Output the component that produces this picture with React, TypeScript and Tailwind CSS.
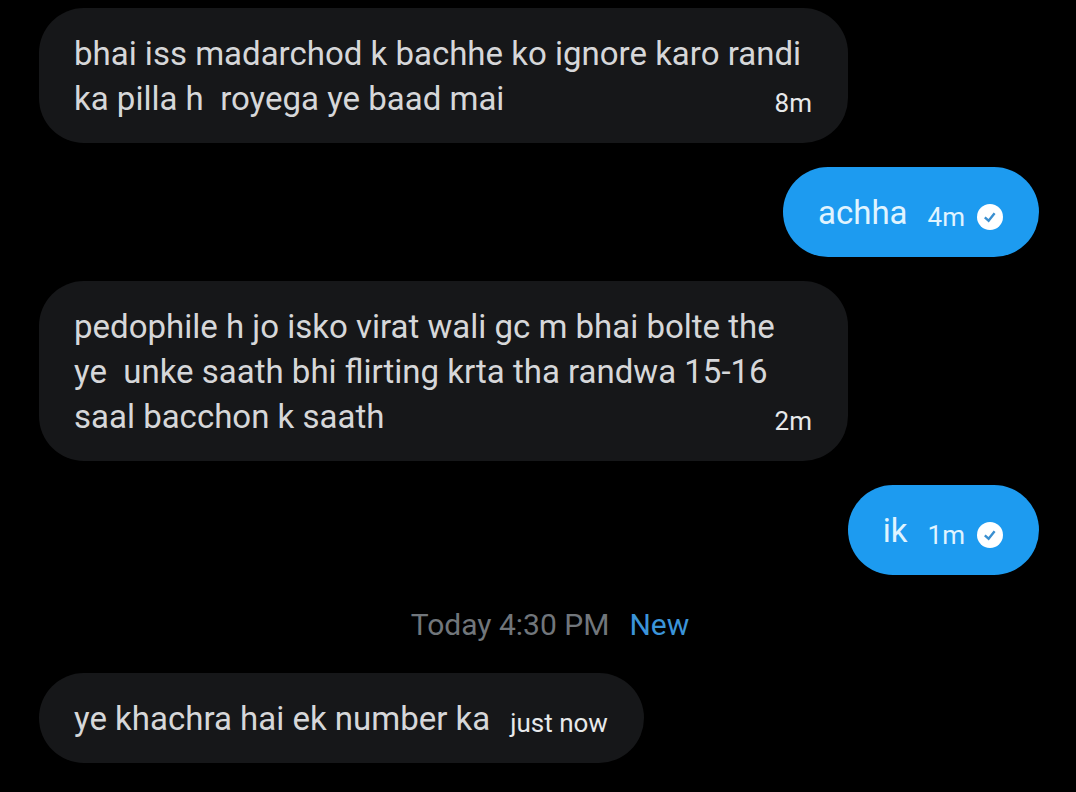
import React from "react";
import clsx from "clsx";

interface Message {
  id: number;
  lines: string[];
  time: string;
  sent?: boolean;
}

const earlier: Message[] = [
  {
    id: 1,
    lines: [
      "bhai iss madarchod k bachhe ko ignore karo randi",
      "ka pilla h  royega ye baad mai",
    ],
    time: "8m",
  },
  { id: 2, lines: ["achha"], time: "4m", sent: true },
  {
    id: 3,
    lines: [
      "pedophile h jo isko virat wali gc m bhai bolte the",
      "ye  unke saath bhi flirting krta tha randwa 15-16",
      "saal bacchon k saath",
    ],
    time: "2m",
  },
  { id: 4, lines: ["ik"], time: "1m", sent: true },
];

const latest: Message[] = [
  { id: 5, lines: ["ye khachra hai ek number ka"], time: "just now" },
];

function SentIcon() {
  return (
    <svg viewBox="0 0 26 26" className="h-[26px] w-[26px]" role="img" aria-label="Sent">
      <circle cx="13" cy="13" r="13" fill="#fff" />
      <path d="M7.8 13.4l3.8 3.3 6-7.4" fill="none" stroke="#3a8fd0" strokeWidth="2.4" />
    </svg>
  );
}

function Bubble({ message }: { message: Message }) {
  const { lines, time, sent } = message;
  const multiline = lines.length > 1;
  const lastLine = lines[lines.length - 1];

  return (
    <li
      className={clsx(
        "max-w-[809px] rounded-[45px] pt-[23px] pr-9 pb-[22px] pl-[35px] text-[33px] leading-[45px] whitespace-pre",
        sent
          ? "self-end bg-[#1d9bf0] text-[#e0f4ff]"
          : "self-start bg-[#161719] text-[#d6d7d9]",
        multiline && "w-full",
      )}
    >
      {lines.slice(0, -1).map((line) => (
        <p key={line}>{line}</p>
      ))}
      {/* the time shares a row with the last line of text */}
      <div className="flex items-end justify-between gap-5">
        <p>{lastLine}</p>
        <span
          className={clsx(
            "flex items-center gap-3 text-[26px] leading-9",
            sent ? "text-[#e0f4ff]" : "text-[#e7e9ea]",
          )}
        >
          <time>{time}</time>
          {sent && <SentIcon />}
        </span>
      </div>
    </li>
  );
}

export default function App() {
  return (
    <main className="min-h-screen bg-black pt-2 pr-[37px] pl-[39px] font-['Roboto',sans-serif]">
      <ul className="flex flex-col gap-6">
        {earlier.map((message) => (
          <Bubble key={message.id} message={message} />
        ))}
      </ul>
      <div className="flex h-[98px] items-center justify-center gap-5 pl-[22px] text-[30px]">
        <span className="text-[#71767b]">Today 4:30 PM</span>
        <span className="text-[#3b94d9]">New</span>
      </div>
      <ul className="flex flex-col gap-6">
        {latest.map((message) => (
          <Bubble key={message.id} message={message} />
        ))}
      </ul>
    </main>
  );
}
